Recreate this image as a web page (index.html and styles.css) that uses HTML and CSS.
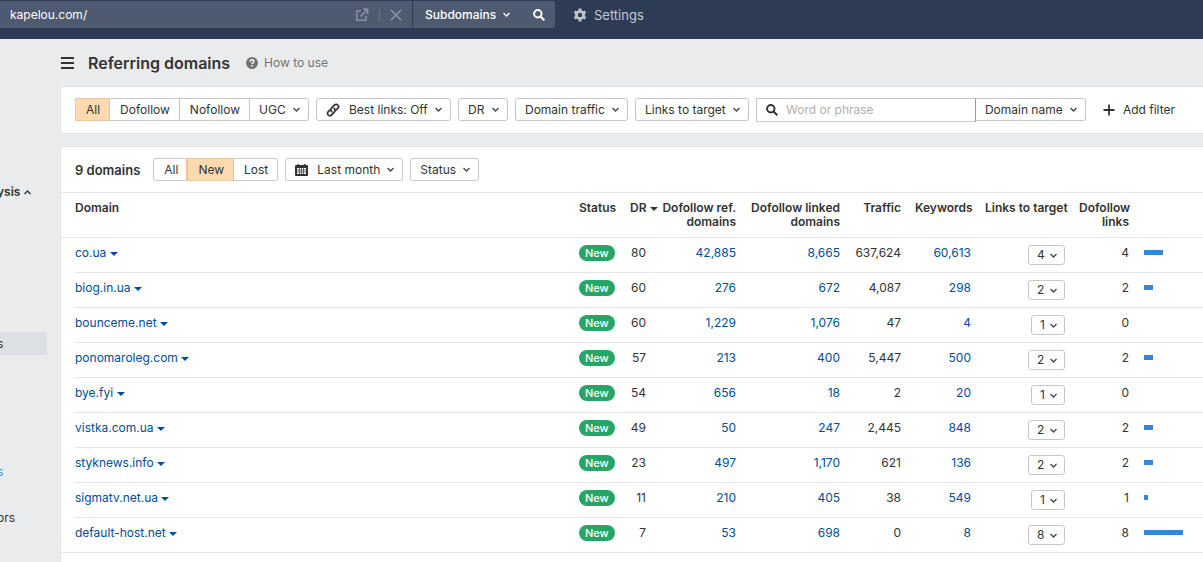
FILE: index.html
```html
<!DOCTYPE html>
<html lang="en">
<head>
    <meta charset="UTF-8">
    <meta name="viewport" content="width=device-width, initial-scale=1.0">
    <title>Referring domains</title>
    <link rel="stylesheet" href="styles.css">
</head>
<body>
    <header class="topbar">
        <form class="target">
            <div class="target-url">
                <input type="text" value="kapelou.com/" aria-label="Domain or URL">
                <button type="button" class="target-icon" aria-label="Open in new tab">
                    <svg width="14" height="14" viewBox="0 0 14 14" fill="none" stroke="currentColor" stroke-width="1.5">
                        <path d="M6 3H1.8v9.2H11V8M8 1.3h4.7V6M12.5 1.5L5.5 8.5"/>
                    </svg>
                </button>
                <span class="target-divider"></span>
                <button type="button" class="target-icon" aria-label="Clear">
                    <svg width="12" height="12" viewBox="0 0 12 12" fill="none" stroke="currentColor" stroke-width="1.5">
                        <path d="M1 1l10 10M11 1L1 11"/>
                    </svg>
                </button>
            </div>
            <select class="target-mode" aria-label="Mode">
                <option>Subdomains</option>
            </select>
            <button type="button" class="target-search" aria-label="Search">
                <svg width="12" height="12" viewBox="0 0 12 12" fill="none" stroke="currentColor" stroke-width="2">
                    <circle cx="4.8" cy="4.8" r="3.7"/>
                    <path d="M7.5 7.5l3.8 3.8"/>
                </svg>
            </button>
        </form>
        <a href="#settings" class="settings">
            <svg width="14" height="14" viewBox="0 0 14 14" fill="none" stroke="currentColor">
                <circle cx="7" cy="7" r="3.6" stroke-width="2.8"/>
                <path d="M7 .6v2M7 11.4v2M1.5 3.8l1.7 1M10.8 9.2l1.7 1M1.5 10.2l1.7-1M10.8 4.8l1.7-1" stroke-width="2.8"/>
            </svg>
            Settings
        </a>
    </header>

    <div class="layout">
        <nav class="sidebar">
            <a href="#analysis" class="side-title">ysis
                <svg width="7" height="5" viewBox="0 0 7 5" fill="none" stroke="currentColor" stroke-width="1.3">
                    <path d="M.5 4l3-3 3 3"/>
                </svg>
            </a>
            <a href="#domains" class="side-link active">s</a>
            <a href="#links" class="side-link new">s</a>
            <a href="#competitors" class="side-link">ors</a>
        </nav>

        <main>
            <div class="page-title">
                <button type="button" class="menu" aria-label="Menu">
                    <svg width="13" height="12" viewBox="0 0 13 12" fill="currentColor">
                        <path d="M0 0h13v2H0zM0 5h13v2H0zM0 10h13v2H0z"/>
                    </svg>
                </button>
                <h1>Referring domains</h1>
                <a href="#help" class="help">
                    <svg width="12" height="12" viewBox="0 0 12 12">
                        <circle cx="6" cy="6" r="6" fill="#737373"/>
                        <path d="M4.1 4.7C4.1 3.4 4.9 2.8 6 2.8s1.9.7 1.9 1.7C7.9 5.7 6 5.7 6 7.1" fill="none" stroke="#fff" stroke-width="1.4"/>
                        <path d="M5.2 8h1.6v1.5H5.2z" fill="#fff"/>
                    </svg>
                    How to use
                </a>
            </div>

            <section class="panel filters">
                <div class="group">
                    <button type="button" class="active">All</button>
                    <button type="button">Dofollow</button>
                    <button type="button">Nofollow</button>
                    <select aria-label="Link attribute">
                        <option>UGC</option>
                    </select>
                </div>
                <div class="dropdown">
                    <svg width="14" height="14" viewBox="0 0 14 14" fill="none" stroke="currentColor" stroke-width="1.7" stroke-linecap="round">
                        <path d="M5.8 8.7C4.6 7.5 4.7 5.9 5.7 4.9l2.7-2.8c1-1 2.5-1 3.4-.1s.9 2.4-.1 3.4L10.2 6.9"/>
                        <path d="M8.2 5.3c1.2 1.2 1.1 2.8.1 3.8l-2.7 2.8c-1 1-2.5 1-3.4.1s-.9-2.4.1-3.4L3.8 7.1"/>
                    </svg>
                    <select aria-label="Best links">
                        <option>Best links: Off</option>
                    </select>
                </div>
                <div class="dropdown">
                    <select aria-label="DR">
                        <option>DR</option>
                    </select>
                </div>
                <div class="dropdown">
                    <select aria-label="Domain traffic">
                        <option>Domain traffic</option>
                    </select>
                </div>
                <div class="dropdown">
                    <select aria-label="Links to target">
                        <option>Links to target</option>
                    </select>
                </div>
                <div class="search">
                    <label class="search-box">
                        <svg width="12" height="12" viewBox="0 0 12 12" fill="none" stroke="currentColor" stroke-width="2">
                            <circle cx="4.8" cy="4.8" r="3.7"/>
                            <path d="M7.5 7.5l3.8 3.8"/>
                        </svg>
                        <input type="text" placeholder="Word or phrase" aria-label="Word or phrase">
                    </label>
                    <div class="dropdown">
                        <select aria-label="Search in">
                            <option>Domain name</option>
                        </select>
                    </div>
                </div>
                <button type="button" class="add-filter">
                    <svg width="12" height="12" viewBox="0 0 12 12" fill="none" stroke="currentColor" stroke-width="1.8">
                        <path d="M6 .5v11M.5 6h11"/>
                    </svg>
                    Add filter
                </button>
            </section>

            <section class="panel results">
                <div class="toolbar">
                    <h2>9 domains</h2>
                    <div class="group">
                        <button type="button">All</button>
                        <button type="button" class="active">New</button>
                        <button type="button">Lost</button>
                    </div>
                    <div class="dropdown">
                        <svg width="13" height="12" viewBox="0 0 13 12">
                            <path d="M1 1h1.5V0H4v1h5V0h1.5v1H12q1 0 1 1v9q0 1-1 1H1q-1 0-1-1V2q0-1 1-1z" fill="currentColor"/>
                            <path d="M2 4h9v6H2z" fill="#fff"/>
                            <path d="M2 6h9M2 8h9M4.5 4v6M6.5 4v6M8.5 4v6" stroke="currentColor" stroke-width=".7"/>
                        </svg>
                        <select aria-label="Period">
                            <option>Last month</option>
                        </select>
                    </div>
                    <div class="dropdown">
                        <select aria-label="Status">
                            <option>Status</option>
                        </select>
                    </div>
                </div>

                <table>
                    <thead>
                        <tr>
                            <th class="domain">Domain</th>
                            <th class="status">Status</th>
                            <th class="dr">DR <span class="caret"></span></th>
                            <th class="ref">Dofollow ref. domains</th>
                            <th class="linked">Dofollow linked domains</th>
                            <th class="traffic">Traffic</th>
                            <th class="keywords">Keywords</th>
                            <th class="links">Links to target</th>
                            <th class="dofollow">Dofollow links</th>
                            <td class="chart"></td>
                        </tr>
                    </thead>
                    <tbody>
                        <tr>
                            <td class="domain"><a href="#co.ua">co.ua <span class="caret"></span></a></td>
                            <td class="status"><span class="badge">New</span></td>
                            <td class="dr">80</td>
                            <td><a href="#ref">42,885</a></td>
                            <td><a href="#linked">8,665</a></td>
                            <td>637,624</td>
                            <td><a href="#keywords">60,613</a></td>
                            <td class="links"><select aria-label="Links from co.ua"><option>4</option></select></td>
                            <td>4</td>
                            <td class="chart"><div class="bar" style="width: 19px"></div></td>
                        </tr>
                        <tr>
                            <td class="domain"><a href="#biog.in.ua">biog.in.ua <span class="caret"></span></a></td>
                            <td class="status"><span class="badge">New</span></td>
                            <td class="dr">60</td>
                            <td><a href="#ref">276</a></td>
                            <td><a href="#linked">672</a></td>
                            <td>4,087</td>
                            <td><a href="#keywords">298</a></td>
                            <td class="links"><select aria-label="Links from biog.in.ua"><option>2</option></select></td>
                            <td>2</td>
                            <td class="chart"><div class="bar" style="width: 9px"></div></td>
                        </tr>
                        <tr>
                            <td class="domain"><a href="#bounceme.net">bounceme.net <span class="caret"></span></a></td>
                            <td class="status"><span class="badge">New</span></td>
                            <td class="dr">60</td>
                            <td><a href="#ref">1,229</a></td>
                            <td><a href="#linked">1,076</a></td>
                            <td>47</td>
                            <td><a href="#keywords">4</a></td>
                            <td class="links"><select aria-label="Links from bounceme.net"><option>1</option></select></td>
                            <td>0</td>
                            <td class="chart"></td>
                        </tr>
                        <tr>
                            <td class="domain"><a href="#ponomaroleg.com">ponomaroleg.com <span class="caret"></span></a></td>
                            <td class="status"><span class="badge">New</span></td>
                            <td class="dr">57</td>
                            <td><a href="#ref">213</a></td>
                            <td><a href="#linked">400</a></td>
                            <td>5,447</td>
                            <td><a href="#keywords">500</a></td>
                            <td class="links"><select aria-label="Links from ponomaroleg.com"><option>2</option></select></td>
                            <td>2</td>
                            <td class="chart"><div class="bar" style="width: 9px"></div></td>
                        </tr>
                        <tr>
                            <td class="domain"><a href="#bye.fyi">bye.fyi <span class="caret"></span></a></td>
                            <td class="status"><span class="badge">New</span></td>
                            <td class="dr">54</td>
                            <td><a href="#ref">656</a></td>
                            <td><a href="#linked">18</a></td>
                            <td>2</td>
                            <td><a href="#keywords">20</a></td>
                            <td class="links"><select aria-label="Links from bye.fyi"><option>1</option></select></td>
                            <td>0</td>
                            <td class="chart"></td>
                        </tr>
                        <tr>
                            <td class="domain"><a href="#vistka.com.ua">vistka.com.ua <span class="caret"></span></a></td>
                            <td class="status"><span class="badge">New</span></td>
                            <td class="dr">49</td>
                            <td><a href="#ref">50</a></td>
                            <td><a href="#linked">247</a></td>
                            <td>2,445</td>
                            <td><a href="#keywords">848</a></td>
                            <td class="links"><select aria-label="Links from vistka.com.ua"><option>2</option></select></td>
                            <td>2</td>
                            <td class="chart"><div class="bar" style="width: 9px"></div></td>
                        </tr>
                        <tr>
                            <td class="domain"><a href="#styknews.info">styknews.info <span class="caret"></span></a></td>
                            <td class="status"><span class="badge">New</span></td>
                            <td class="dr">23</td>
                            <td><a href="#ref">497</a></td>
                            <td><a href="#linked">1,170</a></td>
                            <td>621</td>
                            <td><a href="#keywords">136</a></td>
                            <td class="links"><select aria-label="Links from styknews.info"><option>2</option></select></td>
                            <td>2</td>
                            <td class="chart"><div class="bar" style="width: 9px"></div></td>
                        </tr>
                        <tr>
                            <td class="domain"><a href="#sigmatv.net.ua">sigmatv.net.ua <span class="caret"></span></a></td>
                            <td class="status"><span class="badge">New</span></td>
                            <td class="dr">11</td>
                            <td><a href="#ref">210</a></td>
                            <td><a href="#linked">405</a></td>
                            <td>38</td>
                            <td><a href="#keywords">549</a></td>
                            <td class="links"><select aria-label="Links from sigmatv.net.ua"><option>1</option></select></td>
                            <td>1</td>
                            <td class="chart"><div class="bar" style="width: 4px"></div></td>
                        </tr>
                        <tr>
                            <td class="domain"><a href="#default-host.net">default-host.net <span class="caret"></span></a></td>
                            <td class="status"><span class="badge">New</span></td>
                            <td class="dr">7</td>
                            <td><a href="#ref">53</a></td>
                            <td><a href="#linked">698</a></td>
                            <td>0</td>
                            <td><a href="#keywords">8</a></td>
                            <td class="links"><select aria-label="Links from default-host.net"><option>8</option></select></td>
                            <td>8</td>
                            <td class="chart"><div class="bar" style="width: 39px"></div></td>
                        </tr>
                    </tbody>
                </table>
            </section>
        </main>
    </div>
</body>
</html>
```

FILE: styles.css
```css
* {
    box-sizing: border-box;
    margin: 0;
    padding: 0;
}

body {
    display: flex;
    flex-direction: column;
    min-height: 100vh;
    font-family: Inter, "Liberation Sans", sans-serif;
    font-size: 12px;
    line-height: 18px;
    color: #333;
    background-color: #eaebed;
}

button, input, select {
    font: inherit;
    color: inherit;
    background: none;
    border: none;
    border-radius: 0;
}

button, select {
    cursor: pointer;
}

a {
    color: #004d99;
    text-decoration: none;
}

svg {
    display: block;
    flex: none;
}

select {
    appearance: none;
    padding: 0 22px 0 9px;
    background: url("data:image/svg+xml,%3Csvg xmlns='http://www.w3.org/2000/svg' width='7' height='5' fill='none' stroke='%23444' stroke-width='1.3'%3E%3Cpath d='M.5 1l3 3 3-3'/%3E%3C/svg%3E") no-repeat right 8px center;
}

/* Top bar */
.topbar {
    display: flex;
    align-items: flex-start;
    height: 39px;
    padding-top: 1px;
    background-color: #2e3b55;
}

.target {
    display: flex;
    gap: 1px;
    flex: 0 1 555px;
    height: 27px;
    color: white;
}

.target-url {
    display: flex;
    align-items: center;
    flex: 1;
    padding: 0 10px;
    background-color: #4e5a70;
}

.target-url input {
    flex: 1;
    min-width: 0;
}

.target-icon {
    color: #8b94a3;
}

.target-divider {
    width: 1px;
    height: 12px;
    margin: 0 10px;
    background-color: #6c7687;
}

.target-mode {
    padding: 0 26px 0 12px;
    font-weight: 500;
    background-color: #4e5a70;
    background-image: url("data:image/svg+xml,%3Csvg xmlns='http://www.w3.org/2000/svg' width='7' height='5' fill='none' stroke='%23fff' stroke-width='1.3'%3E%3Cpath d='M.5 1l3 3 3-3'/%3E%3C/svg%3E");
    background-position: right 13px center;
}

.target-search {
    margin-left: -1px;
    padding: 0 10px;
    background-color: #4e5a70;
    border-radius: 0 3px 3px 0;
}

.settings {
    display: flex;
    align-items: center;
    gap: 7px;
    height: 27px;
    margin-left: 18px;
    font-size: 13px;
    color: #c3c8d0;
}

/* Sidebar */
.layout {
    display: flex;
    flex: 1;
}

.sidebar {
    display: flex;
    flex-direction: column;
    width: 61px;
    flex: none;
    padding: 144px 14px 0 0;
    text-indent: -3px;
}

.side-title {
    display: flex;
    align-items: center;
    gap: 4px;
    font-weight: 600;
    color: #333;
    margin-bottom: 131px;
}

.side-link {
    height: 23px;
    line-height: 23px;
    color: #333;
    margin-bottom: 23px;
}

.side-link:last-child {
    margin-bottom: 0;
}

.side-link.active {
    background-color: #dcdfe4;
    border-radius: 0 3px 3px 0;
    margin-bottom: 105px;
}

.side-link.new {
    color: #3c96e8;
}

/* Page header */
main {
    display: flex;
    flex-direction: column;
    flex: 1;
    min-width: 0;
}

.page-title {
    display: flex;
    align-items: center;
    height: 48px;
}

.menu {
    margin-right: 14px;
}

h1 {
    font-size: 16px;
    font-weight: 600;
}

.help {
    display: flex;
    align-items: center;
    gap: 6px;
    margin-left: 16px;
    color: #737373;
}

/* Filters */
.panel {
    background-color: white;
    box-shadow: 0 0 1px rgba(0,0,0,0.2);
}

.filters {
    display: flex;
    align-items: flex-start;
    gap: 7px;
    height: 46px;
    padding: 11px 28px 0 14px;
    margin-bottom: 14px;
}

.group, .dropdown {
    display: flex;
    align-items: center;
    height: 23px;
    border: 1px solid #c7c7c7;
    border-radius: 3px;
}

.group > * {
    height: 21px;
}

.group button {
    padding: 0 9px 0 10px;
}

.group > * + * {
    border-left: 1px solid #c7c7c7;
}

.group .active {
    background-color: #ffd9b0;
    box-shadow: 0 0 0 1px #eec69b;
}

.dropdown select {
    height: 21px;
}

.dropdown svg {
    margin-left: 9px;
}

.search {
    display: flex;
    flex: 1;
}

.search-box {
    display: flex;
    align-items: center;
    gap: 8px;
    flex: 1;
    height: 24px;
    padding-left: 9px;
    border: 1px solid #c7c7c7;
    border-right-color: #999;
}

.search-box input {
    flex: 1;
    width: 0;
    outline: none;
}

.search-box input::placeholder {
    color: #b0b0b0;
}

.search .dropdown {
    border-left: none;
    border-radius: 0 3px 3px 0;
}

.add-filter {
    display: flex;
    align-items: center;
    gap: 8px;
    height: 23px;
    margin-left: 10px;
    white-space: nowrap;
}

/* Results */
.results {
    flex: 1;
}

.toolbar {
    display: flex;
    align-items: center;
    gap: 7px;
    height: 46px;
    padding-left: 14px;
    border-bottom: 1px solid #e6e6e6;
}

h2 {
    font-size: 13px;
    font-weight: 600;
    margin-right: 6px;
}

table {
    width: 100%;
    table-layout: fixed;
    border-collapse: separate;
    border-spacing: 0;
}

th, td {
    padding: 6px 7px 0;
    text-align: right;
    vertical-align: top;
    white-space: nowrap;
    border-bottom: 1px solid #e6e6e6;
}

th {
    padding: 8px 7px;
    font-size: 12px;
    font-weight: 600;
    line-height: 14px;
}

tbody td {
    height: 35px;
}

.domain {
    padding-left: 14px;
    text-align: left;
}

/* Row lines start at the text, only the last one is full width */
tbody tr:not(:last-child) .domain {
    border-bottom-color: transparent;
    background: linear-gradient(#e6e6e6, #e6e6e6) 14px 100% / 100% 1px no-repeat border-box;
}

.status {
    width: 51px;
    text-align: left;
}

.dr {
    width: 35px;
    padding-right: 12px;
}

th.dr {
    padding-right: 2px;
}

.ref {
    width: 85px;
    padding-left: 0;
    white-space: normal;
}

.linked {
    width: 104px;
    white-space: normal;
}

.traffic {
    width: 61px;
}

.keywords {
    width: 70px;
}

.links {
    width: 94px;
}

.dofollow {
    width: 64px;
    white-space: normal;
}

.chart {
    width: 67px;
}

.caret {
    display: inline-block;
    border: 4px solid transparent;
    border-top-color: currentColor;
    border-bottom: none;
    vertical-align: middle;
}

.badge {
    display: inline-block;
    height: 16px;
    padding: 0 6px;
    font-size: 11px;
    font-weight: 500;
    line-height: 16px;
    color: white;
    background-color: #27a567;
    border-radius: 8px;
}

td.links {
    padding-top: 7px;
}

td.links select {
    display: block;
    height: 20px;
    margin-left: auto;
    padding: 0 19px 0 8px;
    border: 1px solid #c7c7c7;
    border-radius: 3px;
    background-position: right 7px center;
}

tbody .chart {
    padding: 12px 0 0 8px;
}

.bar {
    height: 5px;
    background-color: #3486d8;
}
```
